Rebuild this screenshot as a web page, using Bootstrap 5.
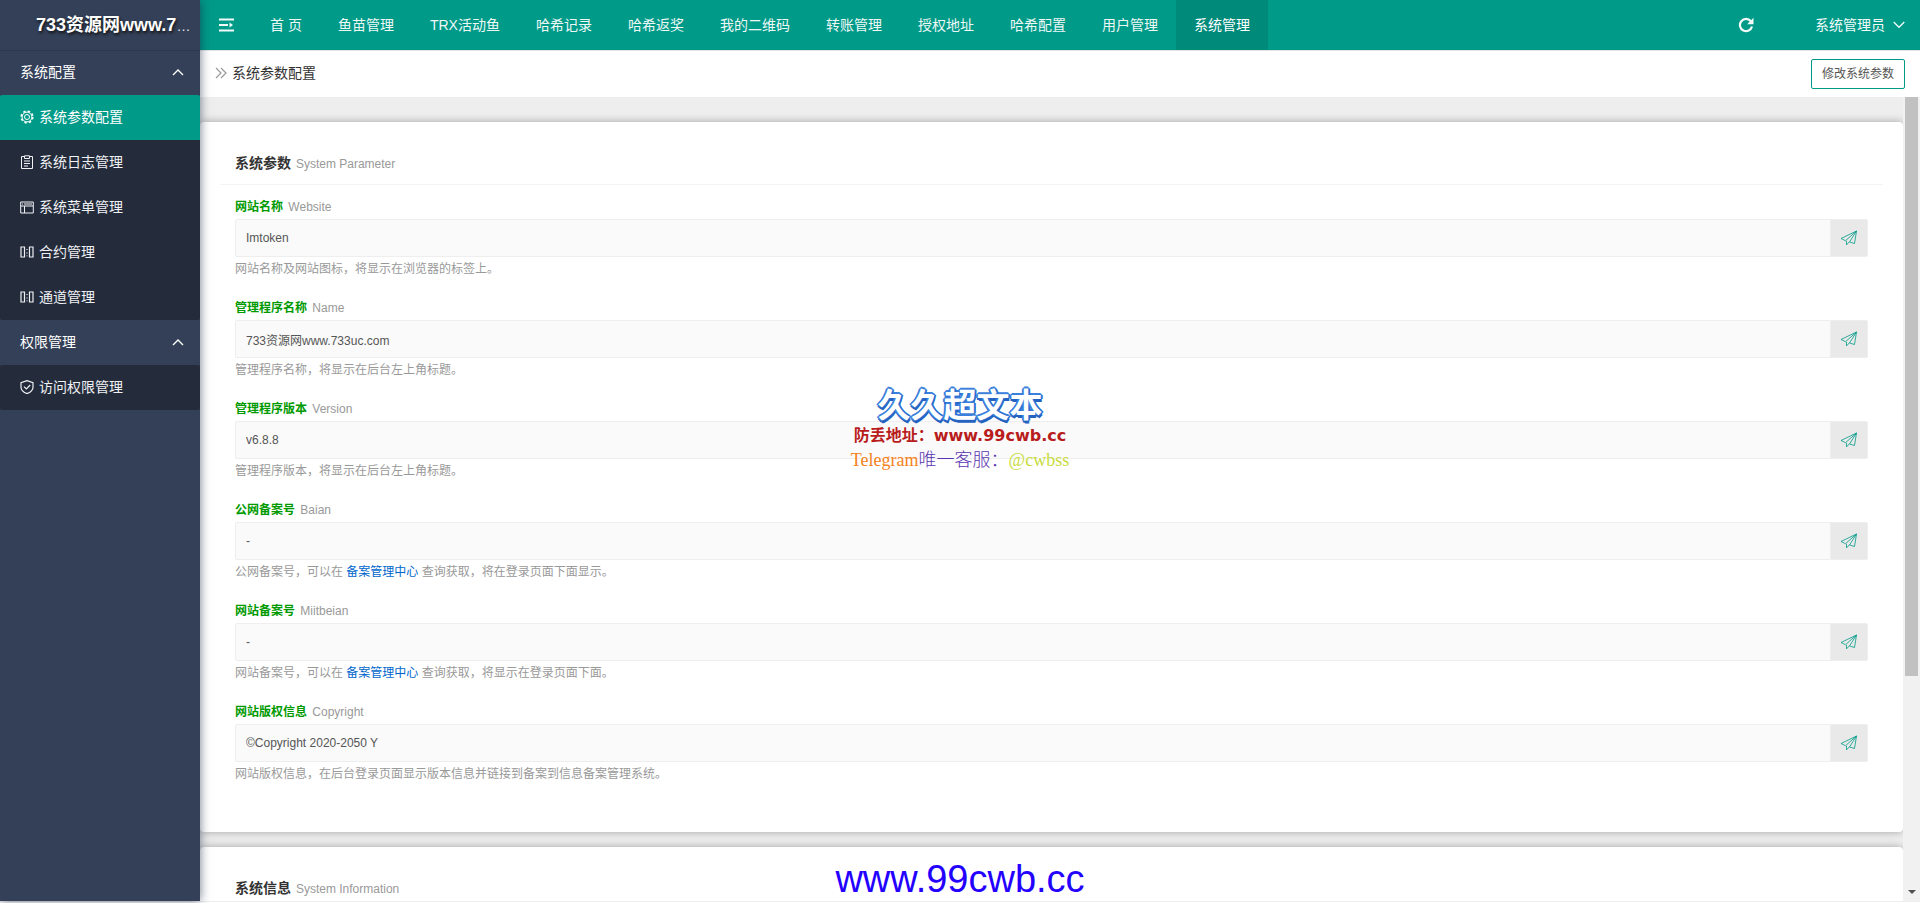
<!DOCTYPE html>
<html lang="zh-CN">
<head>
<meta charset="utf-8">
<meta name="viewport" content="width=device-width, initial-scale=1">
<title>系统参数配置</title>
<link href="https://cdn.jsdelivr.net/npm/bootstrap@5.3.0/dist/css/bootstrap.min.css" rel="stylesheet">
<style>
:root{--teal:#009a88;--navy:#344058;--navy-dark:#242c3c}
body{font-family:"Liberation Sans","Noto Sans CJK SC",sans-serif;font-size:14px;line-height:20px;color:#333;background:#fff}
a{text-decoration:none}
svg{display:block;flex:none}
.shell{min-height:0}
.page-end{height:2px;border-top:1px solid #eee}
/* sidebar */
.side{width:200px;flex:none;background:var(--navy);box-shadow:0 0 10px rgba(20,35,60,.6);z-index:2}
.brand{height:50px;line-height:50px;padding:0 4px 0 36px;color:#e6e8ee}
.brand strong{font-size:18px;color:#fff;text-shadow:1px 2px 3px #111}
.side-head,.side-link{height:45px;padding:0 16px 2px 20px;color:#fff}
.side-head{background:none;border:0;border-radius:0}
.side-head.first{box-shadow:inset 0 1px 0 #2d384e}
.side-link{gap:5px;background:var(--navy-dark);color:#f0f1f4}
.side-link:hover{color:#fff}
.side-link.active{background:var(--teal);color:#fff}
.submenu{border-radius:2px;overflow:hidden}
/* top bar */
.topbar{height:50px;background:var(--teal);flex:none}
.topbar .tool{height:50px;padding:0 18px;border:0;background:none;color:#f2fbfa}
.topbar .nav-link{height:50px;line-height:40px;padding:5px 18px;color:#eef8f7;white-space:nowrap}
.topbar .nav-link:hover,.topbar .nav-link.active{background:#008a7a;color:#fff}
.topbar .user{gap:8px;padding:0 15px}
.topbar .reload{margin-right:28px}
.crumbs{height:47px;border-top:1px solid #e4e4e4;padding:0 15px;flex:none}
.crumb-path{gap:5px;padding-bottom:2px}
.btn-edit{height:30px;padding:0 10px;border:1px solid var(--teal);border-radius:2px;background:#fff;color:#555;font-size:12px;line-height:28px}
/* content */
.viewport-box{background:#eee;min-height:0}
.scroll-area{padding-top:25px;gap:15px;min-width:0}
.panel{flex:none;background:#fff;border-radius:4px;box-shadow:0 0 8px rgba(0,0,0,.32);padding:24px 20px 29px}
.panel-title{margin:0;height:39px;padding:7px 15px 0;font-size:14px;line-height:20px;font-weight:700;border-bottom:1px solid #f4f4f4}
.panel-title small,.field small{font-size:12px;font-weight:400;color:#999;margin-left:1px}
.field small{margin-left:2px}
.fields{padding:12px 15px 0}
.field{height:101px;font-size:12px;line-height:20px}
.field label{height:22px;color:#009a00;font-weight:700;display:block}
.field .form-control{height:38px;padding:0 10px;font-size:12px;color:#555;background:#fafafa;border:1px solid #eee;border-radius:2px}
.field .send{width:38px;padding:0;border:1px solid #eee;border-radius:2px;background:#e9e9e9;color:var(--teal)}
.field p{margin:0;padding-top:2px;color:#999}
.field p a{color:#06c}
/* scrollbar column */
.scroller{width:17px;flex:none;background:#f1f1f1}
.scroller .thumb{width:13px;height:72%;background:#c1c1c1}
.scroller .down{border:4px solid transparent;border-top-color:#505050;border-bottom:0;margin-bottom:7px}
/* watermarks */
.stamp{top:386px;z-index:5;pointer-events:none;white-space:nowrap;text-align:center}
.stamp-name{font-size:33px;line-height:40px;font-weight:700;color:#fff;text-shadow:-2px 0 0 #3a80dc,2px 0 0 #2b6fd0,0 -2px 0 #3a80dc,0 2px 0 #2462c0,-1px -1px 0 #3a80dc,1px -1px 0 #3a80dc,-1px 2px 0 #2462c0,1px 3px 0 #2462c0}
.stamp-site{font-family:"DejaVu Sans","Noto Sans CJK SC",sans-serif;font-size:16px;line-height:20px;font-weight:700;color:#b81c1c}
.stamp-chat{font-family:"Liberation Serif","Noto Sans CJK SC",serif;font-size:18px;line-height:28px;color:#f58220}
.stamp-chat b{font-weight:300;color:#5b35b0}
.stamp-chat i{font-style:normal;color:#c8dc3c}
.stamp-url{bottom:0;z-index:5;pointer-events:none;font-size:38px;line-height:48px;color:#2400ff}
</style>
</head>
<body class="vh-100 d-flex flex-column overflow-hidden position-relative">
<svg class="d-none" aria-hidden="true">
  <symbol id="i-plane" viewBox="0 0 18 16"><path d="M16.500 1 1 8.500l4.500 2.200L16.500 1 14.500 13.500l-5-1.500L16.500 1M6.500 10.900v4l2.800-3" fill="none" stroke="currentColor" stroke-width=".8" stroke-linejoin="round"/></symbol>
  <symbol id="i-map" viewBox="0 0 14 14"><path d="M1 2h3.500v10H1zM9.500 2H13v10H9.500zM7 4v1M7 7.500v1M7 10.500v.8" fill="none" stroke="currentColor" stroke-width="1.200"/></symbol>
  <symbol id="i-up" viewBox="0 0 12 8"><path d="M1 7l5-5 5 5" fill="none" stroke="currentColor" stroke-width="1.400"/></symbol>
</svg>

<div class="shell d-flex flex-fill">
  <aside class="side position-relative">
    <div class="brand text-truncate"><strong>733资源网www.733uc.com</strong></div>
    <button type="button" class="side-head first w-100 d-flex align-items-center justify-content-between">系统配置 <svg width="12" height="8"><use href="#i-up"/></svg></button>
    <nav class="submenu">
      <a href="#" class="side-link active d-flex align-items-center"><svg width="14" height="14" viewBox="0 0 14 14" fill="none" stroke="currentColor"><circle cx="7" cy="7" r="5.800" stroke-width="1.600" stroke-dasharray="2.400 2.155"/><circle cx="7" cy="7" r="4.900"/><circle cx="7" cy="7" r="2.500"/></svg>系统参数配置</a>
      <a href="#" class="side-link d-flex align-items-center"><svg width="14" height="14" viewBox="0 0 14 14" fill="none" stroke="currentColor"><path d="M4 1.500H1.500v12h11v-12H10M4.500.8h5v2.700h-5zM4 6h6M4 8.500h6M4 11h4"/></svg>系统日志管理</a>
      <a href="#" class="side-link d-flex align-items-center"><svg width="14" height="14" viewBox="0 0 14 14" fill="none" stroke="currentColor"><path d="M.7 2h12.600v11H.7zM.7 6h12.600M4.500 6v7"/><path d="M2 4h1M4 4h8"/></svg>系统菜单管理</a>
      <a href="#" class="side-link d-flex align-items-center"><svg width="14" height="14"><use href="#i-map"/></svg>合约管理</a>
      <a href="#" class="side-link d-flex align-items-center"><svg width="14" height="14"><use href="#i-map"/></svg>通道管理</a>
    </nav>
    <button type="button" class="side-head w-100 d-flex align-items-center justify-content-between">权限管理 <svg width="12" height="8"><use href="#i-up"/></svg></button>
    <nav class="submenu">
      <a href="#" class="side-link d-flex align-items-center"><svg width="14" height="14" viewBox="0 0 14 14" fill="none" stroke="currentColor" stroke-width="1.200"><path d="M7 .6l6 2v4.600c0 3-2.500 5-6 6.400-3.500-1.400-6-3.400-6-6.400V2.600z"/><path d="M4 6.600l2.400 2.400 3.800-4"/></svg>访问权限管理</a>
    </nav>
  </aside>

  <main class="d-flex flex-column flex-fill overflow-hidden">
    <header class="topbar d-flex align-items-center">
      <button type="button" class="tool" aria-label="收起菜单"><svg width="16" height="14" viewBox="0 0 16 14"><path d="M1 1.500h15M1 7h9M1 12.500h15" stroke="currentColor" stroke-width="2"/><path d="M11.500 4.500l3.500 2.500-3.500 2.500z" fill="currentColor"/></svg></button>
      <ul class="nav flex-nowrap">
        <li><a class="nav-link" href="#">首 页</a></li>
        <li><a class="nav-link" href="#">鱼苗管理</a></li>
        <li><a class="nav-link" href="#">TRX活动鱼</a></li>
        <li><a class="nav-link" href="#">哈希记录</a></li>
        <li><a class="nav-link" href="#">哈希返奖</a></li>
        <li><a class="nav-link" href="#">我的二维码</a></li>
        <li><a class="nav-link" href="#">转账管理</a></li>
        <li><a class="nav-link" href="#">授权地址</a></li>
        <li><a class="nav-link" href="#">哈希配置</a></li>
        <li><a class="nav-link" href="#">用户管理</a></li>
        <li><a class="nav-link active" href="#">系统管理</a></li>
      </ul>
      <button type="button" class="tool reload ms-auto" aria-label="刷新"><svg width="16" height="16" viewBox="0 0 16 16"><path d="M12.800 4.200A6.100 6.100 0 1 0 14 9.500" fill="none" stroke="currentColor" stroke-width="2.200"/><path d="M15.500.8v6.400H9.200z" fill="currentColor"/></svg></button>
      <button type="button" class="tool user d-flex align-items-center">系统管理员 <svg width="12" height="8" viewBox="0 0 12 8"><path d="M.7 1l5.300 5.300L11.300 1" fill="none" stroke="currentColor" stroke-width="1.300"/></svg></button>
    </header>
    <div class="crumbs d-flex align-items-center justify-content-between">
      <div class="crumb-path d-flex align-items-center"><svg width="12" height="12" viewBox="0 0 12 12" fill="none" stroke="#999" stroke-width="1.200"><path d="M1 1l5 5-5 5M6 1l5 5-5 5"/></svg><span>系统参数配置</span></div>
      <button type="button" class="btn-edit">修改系统参数</button>
    </div>
    <div class="viewport-box d-flex flex-fill">
      <div class="scroll-area d-flex flex-column flex-fill overflow-hidden">
        <section class="panel">
          <h2 class="panel-title">系统参数 <small>System Parameter</small></h2>
          <div class="fields">
            <div class="field"><label for="f1">网站名称 <small>Website</small></label>
              <div class="input-group"><input id="f1" class="form-control" readonly value="Imtoken"><button type="button" class="send" aria-label="复制"><svg class="mx-auto" width="18" height="16"><use href="#i-plane"/></svg></button></div>
              <p>网站名称及网站图标，将显示在浏览器的标签上。</p></div>
            <div class="field"><label for="f2">管理程序名称 <small>Name</small></label>
              <div class="input-group"><input id="f2" class="form-control" readonly value="733资源网www.733uc.com"><button type="button" class="send" aria-label="复制"><svg class="mx-auto" width="18" height="16"><use href="#i-plane"/></svg></button></div>
              <p>管理程序名称，将显示在后台左上角标题。</p></div>
            <div class="field"><label for="f3">管理程序版本 <small>Version</small></label>
              <div class="input-group"><input id="f3" class="form-control" readonly value="v6.8.8"><button type="button" class="send" aria-label="复制"><svg class="mx-auto" width="18" height="16"><use href="#i-plane"/></svg></button></div>
              <p>管理程序版本，将显示在后台左上角标题。</p></div>
            <div class="field"><label for="f4">公网备案号 <small>Baian</small></label>
              <div class="input-group"><input id="f4" class="form-control" readonly value="-"><button type="button" class="send" aria-label="复制"><svg class="mx-auto" width="18" height="16"><use href="#i-plane"/></svg></button></div>
              <p>公网备案号，可以在 <a href="#">备案管理中心</a> 查询获取，将在登录页面下面显示。</p></div>
            <div class="field"><label for="f5">网站备案号 <small>Miitbeian</small></label>
              <div class="input-group"><input id="f5" class="form-control" readonly value="-"><button type="button" class="send" aria-label="复制"><svg class="mx-auto" width="18" height="16"><use href="#i-plane"/></svg></button></div>
              <p>网站备案号，可以在 <a href="#">备案管理中心</a> 查询获取，将显示在登录页面下面。</p></div>
            <div class="field"><label for="f6">网站版权信息 <small>Copyright</small></label>
              <div class="input-group"><input id="f6" class="form-control" readonly value="©Copyright 2020-2050 Y"><button type="button" class="send" aria-label="复制"><svg class="mx-auto" width="18" height="16"><use href="#i-plane"/></svg></button></div>
              <p>网站版权信息，在后台登录页面显示版本信息并链接到备案到信息备案管理系统。</p></div>
          </div>
        </section>
        <section class="panel">
          <h2 class="panel-title">系统信息 <small>System Information</small></h2>
        </section>
      </div>
      <div class="scroller d-flex flex-column align-items-center justify-content-between" aria-hidden="true"><div class="thumb"></div><div class="down"></div></div>
    </div>
  </main>
</div>
<div class="page-end"></div>

<div class="stamp position-absolute start-50 translate-middle-x">
  <div class="stamp-name">久久超文本</div>
  <div class="stamp-site">防丢地址：www.99cwb.cc</div>
  <div class="stamp-chat">Telegram<b>唯一客服：</b><i>@cwbss</i></div>
</div>
<div class="stamp-url position-absolute start-50 translate-middle-x">www.99cwb.cc</div>
<script src="https://cdn.jsdelivr.net/npm/bootstrap@5.3.0/dist/js/bootstrap.bundle.min.js"></script>
</body>
</html>
